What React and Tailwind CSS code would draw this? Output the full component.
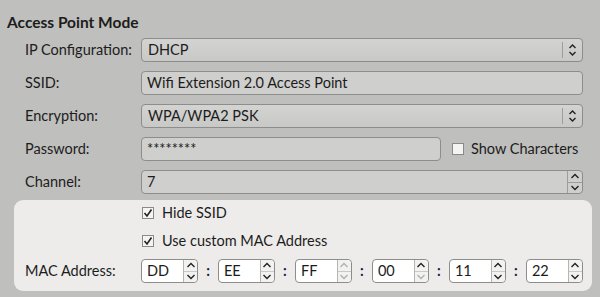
import React from 'react';

const font = { fontFamily: 'Lato, "Open Sans", sans-serif' };

const Updown = ({ up = true, down = true, className = '' }) => (
  <svg width="9" height="14" viewBox="0 0 9 14" className={className}>
    <path d="M1.5 5 L4.5 2 L7.5 5" fill="none" stroke={up ? '#222' : '#aaa'} strokeWidth="1.4" />
    <path d="M1.5 9 L4.5 12 L7.5 9" fill="none" stroke={down ? '#222' : '#aaa'} strokeWidth="1.4" />
  </svg>
);

const Chevron = ({ dir, enabled = true }) => (
  <svg width="10" height="6" viewBox="0 0 10 6">
    <path
      d={dir === 'up' ? 'M1.5 5 L5 1.5 L8.5 5' : 'M1.5 1 L5 4.5 L8.5 1'}
      fill="none"
      stroke={enabled ? '#222' : '#b0b0b0'}
      strokeWidth="1.4"
    />
  </svg>
);

const Combo = ({ value }) => (
  <div className="flex h-[24px] flex-1 items-center rounded-[4px] border border-[#8d8d8b] bg-gradient-to-b from-[#d3d3d1] to-[#c8c8c6]">
    <span className="flex-1 pl-[6px] text-[14.5px] text-[#1c1c1c]">{value}</span>
    <div className="flex h-[16px] w-[20px] items-center justify-center border-l border-[#9d9d9b]">
      <Updown />
    </div>
  </div>
);

const Field = ({ value, className = 'flex-1' }) => (
  <div className={`flex h-[24px] items-center rounded-[4px] border border-[#8d8d8b] bg-[#cfcfcd] pl-[5px] text-[14.5px] text-[#1c1c1c] ${className}`}>
    {value}
  </div>
);

const Check = ({ checked }) => (
  <div className="flex h-[12px] w-[12px] items-center justify-center border border-[#8a8a8a] bg-[#f4f4f4]">
    {checked && (
      <svg width="10" height="10" viewBox="0 0 10 10">
        <path d="M1.5 5 L4 8 L8.5 1.5" fill="none" stroke="#222" strokeWidth="1.6" />
      </svg>
    )}
  </div>
);

const Row = ({ label, children }) => (
  <div className="flex h-[24px] items-center">
    <div className="w-[116px] shrink-0 text-[14.5px] text-[#1c1c1c]">{label}</div>
    {children}
  </div>
);

const MacBox = ({ value, up = true, down = true }) => (
  <div className="flex h-[24px] w-[57px] rounded-[4px] border border-[#8d8d8b] bg-white">
    <span className="flex flex-1 items-center pl-[5px] text-[14.5px] text-[#1c1c1c]">{value}</span>
    <div className="flex w-[14px] flex-col items-center justify-center rounded-r-[4px] border-l border-[#b5b5b3] bg-[#f2f2f1]">
      <div className="flex h-[11px] items-center"><Chevron dir="up" enabled={up} /></div>
      <div className="h-px w-full bg-[#c9c9c7]" />
      <div className="flex h-[11px] items-center"><Chevron dir="down" enabled={down} /></div>
    </div>
  </div>
);

const macParts = [
  { value: 'DD' },
  { value: 'EE' },
  { value: 'FF', up: false, down: false },
  { value: '00', down: false },
  { value: '11' },
  { value: '22' },
];

export default function App() {
  return (
    <div className="h-[297px] w-[600px] overflow-hidden bg-[#bfbfbd] pt-[13px]" style={font}>
      <div className="pl-[7px] text-[15.5px] font-bold leading-[18px] text-[#1c1c1c]">Access Point Mode</div>

      <div className="mt-[7px] flex flex-col gap-[9px] pl-[25px] pr-[17px]">
        <Row label="IP Configuration:">
          <Combo value="DHCP" />
        </Row>
        <Row label="SSID:">
          <Field value="Wifi Extension 2.0 Access Point" />
        </Row>
        <Row label="Encryption:">
          <Combo value="WPA/WPA2 PSK" />
        </Row>
        <Row label="Password:">
          <Field value="********" className="w-[300px]" />
          <div className="ml-[11px] flex items-center gap-[7px]">
            <Check />
            <span className="text-[14.5px] text-[#1c1c1c]">Show Characters</span>
          </div>
        </Row>
        <Row label="Channel:">
          <div className="flex h-[24px] flex-1 rounded-[4px] border border-[#8d8d8b] bg-[#cfcfcd]">
            <span className="flex flex-1 items-center pl-[5px] text-[14.5px] text-[#1c1c1c]">7</span>
            <div className="flex w-[15px] flex-col items-center justify-center border-l border-[#9d9d9b]">
              <div className="flex h-[11px] items-center"><Chevron dir="up" /></div>
              <div className="h-px w-full bg-[#9d9d9b]" />
              <div className="flex h-[11px] items-center"><Chevron dir="down" /></div>
            </div>
          </div>
        </Row>
      </div>

      <div className="ml-[14px] mr-[8px] mt-[6px] flex flex-col rounded-[9px] bg-[#edecea] pb-[8px] pl-[11px] pr-[9px] pt-[3px]">
        <div className="flex h-[20px] items-center gap-[8px] pl-[117px]">
          <Check checked />
          <span className="text-[14.5px] text-[#1c1c1c]">Hide SSID</span>
        </div>
        <div className="mt-[8px] flex h-[20px] items-center gap-[8px] pl-[117px]">
          <Check checked />
          <span className="text-[14.5px] text-[#1c1c1c]">Use custom MAC Address</span>
        </div>
        <div className="mt-[8px] flex h-[24px] items-center">
          <div className="w-[116px] shrink-0 text-[14.5px] text-[#1c1c1c]">MAC Address:</div>
          <div className="flex flex-1 items-center justify-between">
            {macParts.map((p, i) => (
              <React.Fragment key={p.value}>
                {i > 0 && <span className="text-[14.5px] font-bold text-[#1c1c3c]">:</span>}
                <MacBox value={p.value} up={p.up !== false} down={p.down !== false} />
              </React.Fragment>
            ))}
          </div>
        </div>
      </div>
    </div>
  );
}
